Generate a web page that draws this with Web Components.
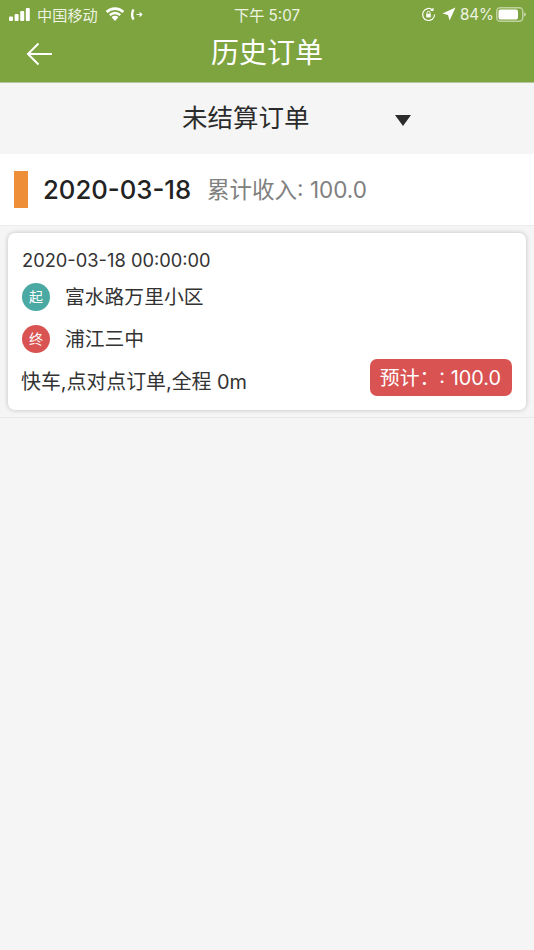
<!DOCTYPE html>
<html>
<head>
<meta charset="utf-8">
<style>
  html, body { margin: 0; padding: 0; height: 100%; }
  body { background: #f5f5f5; font-family: Inter, "Noto Sans CJK SC", sans-serif; }
</style>
</head>
<body>
<status-bar></status-bar>
<nav-bar>历史订单</nav-bar>
<filter-select>未结算订单</filter-select>
<date-row date="2020-03-18" income="累计收入: 100.0"></date-row>
<order-list>
  <order-card time="2020-03-18 00:00:00" from="富水路万里小区" to="浦江三中" info="快车,点对点订单,全程 0m" price="预计：: 100.0"></order-card>
</order-list>

<script>
class StatusBar extends HTMLElement {
  constructor () {
    super();
    this.root = this.attachShadow({mode: 'open'});
  }
  connectedCallback() {
    this.root.innerHTML = `
    <style>
      :host { display: flex; align-items: center; height: 28px; padding: 0 8px 0 9px; background: #7ea440; color: #eef3e2; font-size: 15.2px; }
      .left, .right { flex: 1; display: flex; align-items: center; }
      .right { justify-content: flex-end; }
      .time { margin-left: -1px; }
      svg { display: block; }
    </style>
    <div class="left">
      <svg width="22" height="13" viewBox="0 0 22 13" fill="#fff">
        <rect x="0" y="8.5" width="4" height="4.5" rx="1"/><rect x="5.6" y="6" width="4" height="7" rx="1"/>
        <rect x="11.2" y="3" width="4" height="10" rx="1"/><rect x="16.8" y="0" width="4" height="13" rx="1"/>
      </svg>
      <span style="margin-left:6px">中国移动</span>
      <svg style="margin-left:7px" width="20" height="14" viewBox="0 0 20 14" fill="#fff">
        <path d="M10 14 L6.6 10.2 A4.8 4.8 0 0 1 13.4 10.2Z"/>
        <path d="M10 4.8 A8.6 8.6 0 0 1 16 7.3 L14.4 9 A6.2 6.2 0 0 0 5.6 9 L4 7.3 A8.6 8.6 0 0 1 10 4.8Z"/>
        <path d="M10 .2 A13 13 0 0 1 19.3 4.1 L17.4 6 A10.4 10.4 0 0 0 2.6 6 L.7 4.1 A13 13 0 0 1 10 .2Z"/>
      </svg>
      <svg style="margin-left:5px" width="13" height="13" viewBox="0 0 13 13" fill="none" stroke="#fff">
        <path d="M3.6 1.5 C1.6 3.8 1.6 9.2 3.6 11.5" stroke-width="2.4"/>
        <path d="M6.5 6.5 H11.5 M9.6 4.5 L11.8 6.5 L9.6 8.5" stroke-width="1.1"/>
      </svg>
    </div>
    <div class="time">下午 5:07</div>
    <div class="right">
      <svg width="15" height="15" viewBox="0 0 15 15" fill="none" stroke="#fff" stroke-width="1.2">
        <path d="M13.6 7.5 A6 6 0 1 1 11.6 3"/><path d="M12 1 V3.4 H9.6" stroke-width="1.1"/>
        <rect x="5.2" y="6.8" width="4.6" height="3.6" fill="#fff" stroke="none"/>
        <path d="M6 6.8 V5.8 A1.5 1.5 0 0 1 9 5.8 V6.8" stroke-width="1"/>
      </svg>
      <svg style="margin-left:6px" width="14" height="14" viewBox="0 0 14 14" fill="#fff"><path d="M13.5 .5 L7.6 13.5 L6 8 L.5 6.4Z"/></svg>
      <span style="margin-left:4px">84%</span>
      <svg style="margin-left:2px" width="30" height="15" viewBox="0 0 30 15">
        <rect x=".75" y=".75" width="26" height="13.5" rx="3.5" fill="none" stroke="#fff" stroke-opacity=".5" stroke-width="1.5"/>
        <rect x="2.5" y="2.5" width="19.5" height="10" rx="2" fill="#fff"/>
        <path d="M28 5.5 a2 2 0 0 1 0 4Z" fill="#fff" fill-opacity=".5"/>
      </svg>
    </div>`;
  }
}

class NavBar extends HTMLElement {
  constructor () {
    super();
    this.root = this.attachShadow({mode: 'open'});
  }
  connectedCallback() {
    this.root.innerHTML = `
    <style>
      :host { display: flex; align-items: center; justify-content: center; position: relative; height: 55px; box-sizing: border-box; padding-bottom: 9px; background: #7ea440; border-bottom: 1px solid #b5c79a; color: #fff; font-size: 28px; }
      svg { position: absolute; left: 26px; top: 13px; }
    </style>
    <svg width="27" height="26" viewBox="0 0 27 26" fill="none" stroke="#fff" stroke-width="2"><path d="M26 13 H2 M12.5 2.5 L2 13 L12.5 23.5"/></svg>
    <div><slot></slot></div>`;
  }
}

class FilterSelect extends HTMLElement {
  constructor () {
    super();
    this.root = this.attachShadow({mode: 'open'});
  }
  connectedCallback() {
    this.root.innerHTML = `
    <style>
      :host { display: flex; align-items: center; gap: 85.5px; height: 71px; padding: 0 0 6px 182px; box-sizing: border-box; background: #f5f5f5; color: #2b2b2b; font-size: 25.5px; }
      .caret { width: 0; height: 0; margin-top: 9px; border-left: 8px solid transparent; border-right: 8px solid transparent; border-top: 11px solid #2b2b2b; }
    </style>
    <div><slot></slot></div>
    <div class="caret"></div>`;
  }
}

class DateRow extends HTMLElement {
  constructor () {
    super();
    this.root = this.attachShadow({mode: 'open'});
  }
  connectedCallback() {
    this.root.innerHTML = `
    <style>
      :host { display: flex; align-items: center; height: 71px; padding-left: 14px; background: #fff; }
      .bar { width: 14px; height: 37px; background: #ef8e38; }
      .date { margin-left: 15px; font-size: 25.7px; font-weight: 450; color: #222; }
      .income { margin: 0 0 4px 16px; font-size: 22.5px; color: #808080; }
    </style>
    <div class="bar"></div>
    <div class="date">${this.getAttribute('date')}</div>
    <div class="income">${this.getAttribute('income')}</div>`;
  }
}

class OrderList extends HTMLElement {
  constructor () {
    super();
    this.root = this.attachShadow({mode: 'open'});
  }
  connectedCallback() {
    this.root.innerHTML = `
    <style>
      :host { display: block; padding: 7px 8px; border-top: 1px solid #ececec; border-bottom: 1px solid #e8e8e8; }
    </style>
    <slot></slot>`;
  }
}

class OrderCard extends HTMLElement {
  constructor () {
    super();
    this.root = this.attachShadow({mode: 'open'});
  }
  connectedCallback() {
    const a = n => this.getAttribute(n);
    this.root.innerHTML = `
    <style>
      :host { display: block; height: 177px; box-sizing: border-box; padding: 15px 14px 14px; background: #fff; border-radius: 7px; box-shadow: 0 0 5px rgba(0,0,0,.22); color: #333; font-size: 19.8px; }
      .time { height: 24px; line-height: 24px; font-size: 18.3px; }
      .place { display: flex; align-items: center; gap: 15px; height: 28px; margin-top: 11px; }
      .place + .place { margin-top: 14px; }
      .place .name { padding-bottom: 4px; }
      .dot { width: 28px; height: 28px; padding-bottom: 2px; box-sizing: border-box; border-radius: 50%; color: #fff; font-size: 14px; display: flex; align-items: center; justify-content: center; }
      .start { background: #4aa9a2; }
      .end { background: #d95353; }
      .foot { display: flex; justify-content: space-between; align-items: flex-start; margin-top: 6px; }
      .info { margin-top: 10px; line-height: 26px; margin-left: -1px; font-size: 19.9px; }
      .price { background: #d95353; color: #fff; height: 37px; line-height: 38px; padding: 0 11px 0 10px; border-radius: 7px; font-size: 19.85px; }
    </style>
    <div class="time">${a('time')}</div>
    <div class="place"><div class="dot start">起</div><div class="name">${a('from')}</div></div>
    <div class="place"><div class="dot end">终</div><div class="name">${a('to')}</div></div>
    <div class="foot"><div class="info">${a('info')}</div><div class="price">${a('price')}</div></div>`;
  }
}

customElements.define('status-bar', StatusBar);
customElements.define('nav-bar', NavBar);
customElements.define('filter-select', FilterSelect);
customElements.define('date-row', DateRow);
customElements.define('order-list', OrderList);
customElements.define('order-card', OrderCard);
</script>
</body>
</html>
